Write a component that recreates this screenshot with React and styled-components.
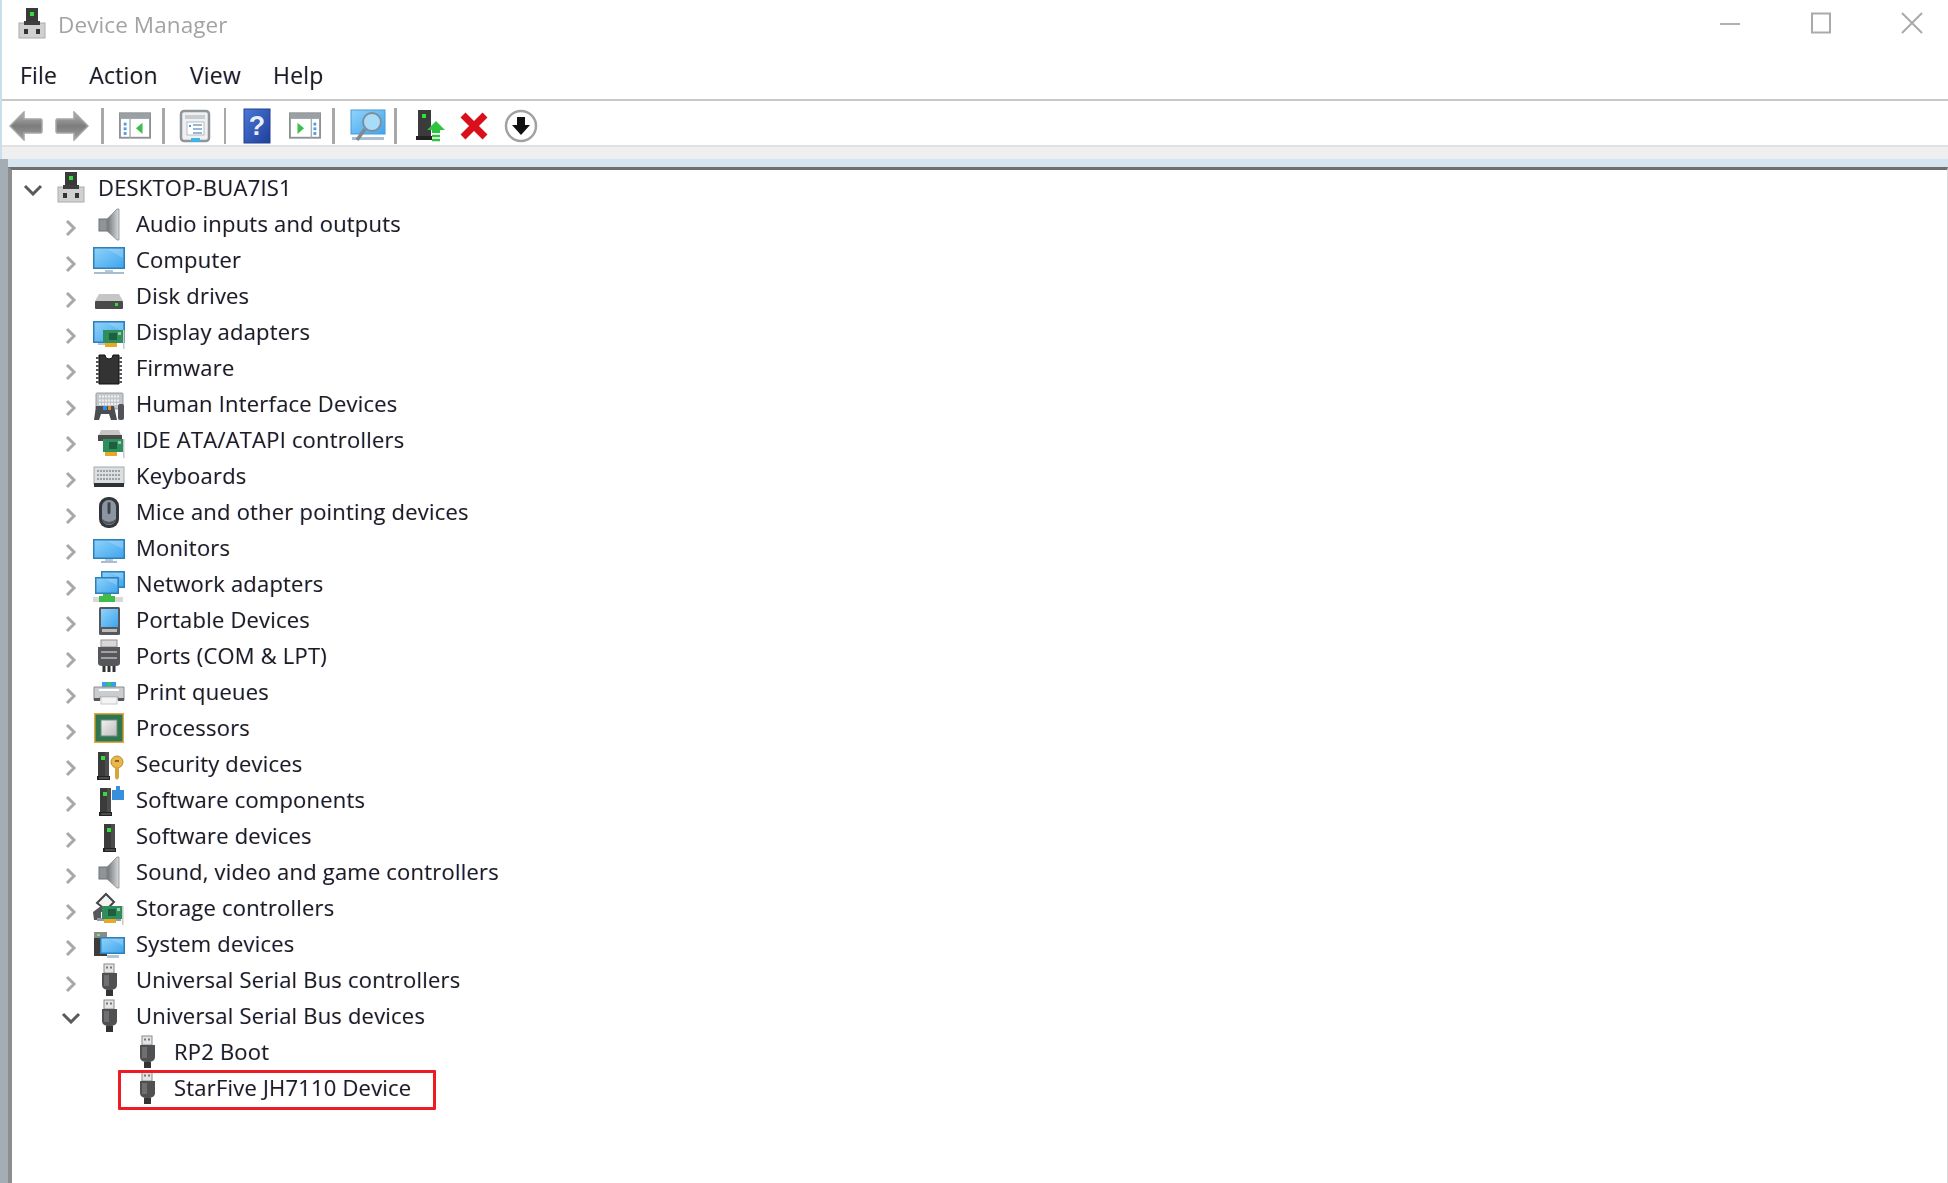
import React from "react";
import styled, { createGlobalStyle } from "styled-components";

const GlobalStyle = createGlobalStyle`
  html, body {
    margin: 0;
    padding: 0;
    background: #fff;
    overflow: hidden;
  }
  * { box-sizing: border-box; }
`;

const Window = styled.div`
  width: 1948px;
  height: 1183px;
  display: flex;
  flex-direction: column;
  background: #fff;
  font-family: "Open Sans", "Noto Sans", sans-serif;
  color: #1c1c28;
  overflow: hidden;
  filter: blur(0.6px);
  text-shadow: 0.6px 0 rgba(255, 130, 0, 0.25), -0.6px 0 rgba(0, 110, 255, 0.25);
`;

const Chrome = styled.div`
  border-left: 2px solid #c9dfeb;
  display: flex;
  flex-direction: column;
`;

const TitleBar = styled.div`
  height: 50px;
  display: flex;
  align-items: center;
  padding: 0 25px 2px 14px;
`;

const TitleText = styled.div`
  font-size: 22.5px;
  letter-spacing: 0.1px;
  color: #a3a3a6;
  margin-left: 10px;
  flex: 1;
  text-shadow: none;
`;

const WinButtons = styled.div`
  display: flex;
  gap: 69px;
  margin-bottom: 2px;
`;

const MenuBar = styled.div`
  height: 51px;
  display: flex;
  align-items: center;
  gap: 32px;
  padding: 1px 0 0 18px;
  border-bottom: 2px solid #c8c8c8;
`;

const MenuItem = styled.span`
  font-size: 23px;
  letter-spacing: 0.2px;
`;

const Toolbar = styled.div`
  height: 46px;
  display: flex;
  align-items: center;
  padding: 5px 0 0 2px;
  border-bottom: 2px solid #e2e2e2;
`;

const Tool = styled.div`
  width: ${({ $w }) => $w}px;
  height: 36px;
  display: flex;
  align-items: center;
  justify-content: center;
  flex: none;
`;

const Sep = styled.div`
  width: 3px;
  height: 36px;
  background: #a8a8a8;
`;

const Band = styled.div`
  height: 12px;
  background: #efefef;
`;

const Lower = styled.div`
  flex: 1;
  display: flex;
  min-height: 0;
`;

const Strip = styled.div`
  width: 8px;
  background: #a3adb3;
`;

const Pane = styled.div`
  flex: 1;
  display: flex;
  flex-direction: column;
  min-width: 0;
`;

const PaneTop = styled.div`
  height: 8px;
  background: #d6e4f0;
`;

const Tree = styled.div`
  flex: 1;
  background: #fff;
  border-top: 3px solid #6f6f6f;
  border-left: 4px solid #8d8d8d;
  border-right: 1px solid #d8d8d8;
`;

const Row = styled.div`
  position: relative;
  height: 36px;
  display: flex;
  align-items: center;
  padding-left: ${({ $depth }) => 9 + $depth * 38}px;
`;

const ChevronSlot = styled.div`
  width: 24px;
  height: 36px;
  flex: none;
  display: flex;
  align-items: center;
  justify-content: center;
  padding-top: ${({ $open }) => ($open ? 4 : 7)}px;
`;

const IconSlot = styled.div`
  width: 32px;
  height: 32px;
  flex: none;
  margin-left: 10px;
`;

const Label = styled.span`
  margin-left: 11px;
  padding-bottom: 2px;
  font-size: 22px;
  letter-spacing: 0.2px;
  white-space: nowrap;
`;

const Highlight = styled.div`
  position: absolute;
  left: 106px;
  top: 0;
  width: 318px;
  height: 40px;
  border: 3px solid #ed1c24;
  border-radius: 1px;
`;

const Defs = styled.svg`
  display: block;
  width: 0;
  height: 0;
`;

const Svg = ({ dy = 0, children }) => (
  <svg width="32" height="32" viewBox="0 0 32 32" style={{ display: "block", overflow: "visible" }}>
    <g transform={`translate(0 ${dy})`}>{children}</g>
  </svg>
);

const Tower = ({ x = 0, y = 0 }) => (
  <g transform={`translate(${x} ${y})`}>
    <rect x="1" y="0" width="11" height="24" fill="#3b3b3b" />
    <rect x="8" y="0" width="4" height="24" fill="#4c4c4c" />
    <rect x="4" y="4" width="4" height="4" fill="#2fe03c" />
    <rect x="0" y="24" width="13" height="4" fill="#222" />
    <rect x="2" y="25.5" width="10" height="1" fill="#777" />
  </g>
);

const Screen = ({ x = 0, y = 0, w = 32, h = 22 }) => (
  <g transform={`translate(${x} ${y})`}>
    <rect x="0.75" y="0.75" width={w - 1.5} height={h - 1.5} fill="url(#sky)" stroke="#2f7fb8" strokeWidth="1.5" />
    <path d={`M${w * 0.45} 2 L${w - 2} 2 L${w - 2} ${h * 0.5} Z`} fill="#ffffff" opacity="0.18" />
  </g>
);

const Stand = ({ y = 23, wide }) => (
  <g>
    <rect x="12" y={y} width="8" height="2" fill="#b8c8d4" />
    <rect x={wide ? 1 : 8} y={y + 2} width={wide ? 30 : 16} height="2" fill="#a9bdcc" />
  </g>
);

const Card = ({ x = 0, y = 0 }) => (
  <g transform={`translate(${x} ${y})`}>
    <rect x="0" y="0" width="20" height="13" fill="#2f8f5c" />
    <rect x="6" y="3" width="8" height="7" fill="#1f5f3f" />
    <rect x="15" y="2" width="3" height="3" fill="#8fd0a8" />
    <rect x="2" y="13" width="12" height="4" fill="#e9a825" />
    <rect x="20" y="0" width="1.5" height="19" fill="#c8c8c8" />
  </g>
);

const Disk = ({ y = 0 }) => (
  <g transform={`translate(0 ${y})`}>
    <path d="M6 0 H26 L30 7 H2 Z" fill="#c6c6c6" />
    <rect x="2" y="7" width="28" height="8" rx="1" fill="#4a4a4a" />
  </g>
);

const Speaker = () => (
  <Svg>
    <rect x="6" y="11" width="8" height="12" fill="#8f9498" stroke="#6f7377" />
    <path d="M14 11 L24 1 H26 V32 H24 L14 23 Z" fill="url(#cone)" stroke="#8a8d90" strokeWidth="0.8" />
  </Svg>
);

const Usb = () => (
  <Svg>
    <rect x="11" y="0" width="10" height="9" fill="#e4e4e4" stroke="#8a8a8a" />
    <rect x="13" y="2.5" width="2" height="2" fill="#777" />
    <rect x="17" y="2.5" width="2" height="2" fill="#777" />
    <path d="M9 9 H24 V21 Q24 25 19 26 H14 Q9 25 9 21 Z" fill="#505052" />
    <rect x="11" y="11" width="5" height="11" fill="#6f6f72" />
    <rect x="13" y="26" width="7" height="6" fill="#333" />
  </Svg>
);

const Desktop = () => (
  <Svg>
    <rect x="10" y="0" width="12" height="18" fill="#3a3a3a" />
    <rect x="14" y="4" width="4" height="4" fill="#2fe03c" />
    <rect x="3" y="15" width="26" height="15" fill="#d0d0d0" stroke="#ababab" />
    <rect x="8" y="13" width="16" height="4" fill="#3f3f3f" />
    <rect x="8" y="21" width="4" height="5" fill="#333" />
    <rect x="20" y="21" width="4" height="5" fill="#333" />
  </Svg>
);

const icons = {
  desktop: <Desktop />,
  audio: <Speaker />,
  computer: (
    <Svg dy={2}>
      <Screen h={22} y={1} />
      <Stand y={24} wide />
    </Svg>
  ),
  disk: (
    <Svg dy={3}>
      <Disk y={11} />
      <rect x="22" y="20" width="3" height="3" fill="#2fe03c" />
    </Svg>
  ),
  display: (
    <Svg dy={4}>
      <Screen h={22} y={1} />
      <rect x="5" y="23" width="8" height="2" fill="#b4c6d4" />
      <Card x={10} y={10} />
    </Svg>
  ),
  firmware: (
    <Svg dy={2}>
      <path d="M6 1 H12 A4 4 0 0 0 20 1 H26 V30 H6 Z" fill="#333" stroke="#111" />
      <path d="M3 4 H6 M3 8 H6 M3 12 H6 M3 16 H6 M3 20 H6 M3 24 H6 M3 28 H6 M26 4 H29 M26 8 H29 M26 12 H29 M26 16 H29 M26 20 H29 M26 24 H29 M26 28 H29" stroke="#555" strokeWidth="2" />
    </Svg>
  ),
  hid: (
    <Svg dy={5}>
      <rect x="3" y="0" width="27" height="16" rx="1" fill="#c4c8cc" stroke="#9a9da0" />
      <path d="M6 3.5 H27 M6 7.5 H27 M6 11 H27" stroke="#f0f0f0" strokeWidth="2" strokeDasharray="2 1" />
      <path d="M1 27 L3 13 H21 L24 27 H18 L16 21 H8 L6 27 Z" fill="#4a4d52" />
      <rect x="10" y="13" width="4" height="4" fill="#2f8fe0" />
      <rect x="15" y="13" width="3" height="4" fill="#e08a3a" />
      <rect x="25" y="11" width="6" height="16" rx="2" fill="#50545a" />
    </Svg>
  ),
  ide: (
    <Svg dy={6}>
      <path d="M8 0 H26 L28 5 H6 Z" fill="#c6c6c6" />
      <rect x="5" y="5" width="24" height="6" fill="#4a4a4a" />
      <Card x={10} y={9} />
    </Svg>
  ),
  keyboard: (
    <Svg dy={7}>
      <rect x="1" y="0" width="30" height="17" fill="#dcdfe2" stroke="#a6a9ac" />
      <path d="M4 4 H28 M4 8 H28 M4 12 H28" stroke="#9da0a3" strokeWidth="2" strokeDasharray="2 1" />
      <rect x="1" y="16" width="30" height="4" fill="#2f3236" />
    </Svg>
  ),
  mouse: (
    <Svg dy={1}>
      <rect x="6" y="0" width="20" height="31" rx="9" fill="#33363b" />
      <rect x="9" y="3" width="14" height="25" rx="6.5" fill="#8b95a2" />
      <rect x="14.5" y="5" width="3" height="12" rx="1.5" fill="#40444a" />
      <path d="M9 22 Q16 28 23 22 V24 Q16 31 9 24 Z" fill="#50545a" />
    </Svg>
  ),
  monitor: (
    <Svg dy={6}>
      <Screen h={20} y={1} />
      <Stand y={21} />
    </Svg>
  ),
  network: (
    <Svg dy={3}>
      <Screen x={8} y={0} w={24} h={17} />
      <Screen x={2} y={6} w={24} h={17} />
      <rect x="0" y="26" width="30" height="5" fill="#d8d8d8" />
      <path d="M10 23 H18 V25 H22 V31 H6 V25 H10 Z" fill="#3fbd4a" />
    </Svg>
  ),
  portable: (
    <Svg dy={3}>
      <rect x="6" y="0" width="21" height="28" rx="1.5" fill="#55585c" />
      <rect x="8" y="2" width="17" height="18" fill="url(#sky)" />
      <rect x="9" y="22" width="15" height="3" fill="#bbb" />
    </Svg>
  ),
  ports: (
    <Svg>
      <rect x="8" y="0" width="16" height="7" fill="#d8d8d8" stroke="#8f8f8f" />
      <path d="M5 7 H27 V23 Q27 26 23 26 H9 Q5 26 5 23 Z" fill="#55575a" />
      <path d="M8 12 H24 M8 18 H24" stroke="#a0a0a0" strokeWidth="2" />
      <path d="M11 26 V32 M16 26 V32 M21 26 V32" stroke="#333" strokeWidth="3" />
    </Svg>
  ),
  print: (
    <Svg dy={6}>
      <rect x="9" y="0" width="14" height="6" fill="#3a9fe0" />
      <rect x="14" y="0" width="4" height="6" fill="#39c26a" />
      <path d="M1 5 H31 V18 H25 V15 H7 V18 H1 Z" fill="#c9cdd0" stroke="#8b8e91" />
      <rect x="6" y="7" width="20" height="2" fill="#fff" />
      <rect x="8" y="15" width="16" height="7" fill="#f4f4f4" stroke="#c8c8c8" />
      <rect x="1" y="16" width="6" height="3" fill="#55585c" />
      <rect x="25" y="16" width="6" height="3" fill="#55585c" />
    </Svg>
  ),
  cpu: (
    <Svg>
      <rect x="1" y="1" width="30" height="30" fill="#e0a93a" />
      <rect x="2.5" y="2.5" width="27" height="27" fill="#2f7550" />
      <rect x="8" y="8" width="16" height="16" fill="url(#die)" stroke="#6f8f80" />
    </Svg>
  ),
  security: (
    <Svg dy={3}>
      <Tower x={4} y={1} />
      <circle cx="24" cy="11" r="6" fill="#e8b64a" stroke="#b98a2a" />
      <rect x="22" y="9" width="4" height="2" fill="#8a6a20" />
      <path d="M22 16 H26 V27 L24 29 L22 27 Z" fill="#d9a53a" />
    </Svg>
  ),
  components: (
    <Svg>
      <Tower x={6} y={4} />
      <path d="M19 6 H23 V2 H27 V6 H31 V16 H19 Z" fill="#3a8fdc" />
    </Svg>
  ),
  software: (
    <Svg>
      <Tower x={10} y={4} />
    </Svg>
  ),
  sound: <Speaker />,
  storage: (
    <Svg>
      <path d="M4 11 L13 2 L21 10 L13 18 Z" fill="#f4f4f4" stroke="#444" strokeWidth="2" />
      <path d="M0 20 L8 14 L14 20 H8 V28 H1 Z" fill="#55585c" />
      <rect x="4" y="26" width="24" height="3" fill="#999" />
      <Card x={9} y={14} />
    </Svg>
  ),
  system: (
    <Svg dy={4}>
      <rect x="1" y="0" width="13" height="24" fill="#3c3c3c" />
      <rect x="1" y="0" width="13" height="6" fill="#8a8a8a" />
      <rect x="4" y="2" width="3" height="2" fill="#7fe07f" />
      <Screen x={7} y={5} w={25} h={17} />
      <rect x="14" y="23" width="12" height="3" fill="#b4c6d4" />
    </Svg>
  ),
  usb: <Usb />,
};

const rows = [
  { depth: 0, open: true, icon: "desktop", text: "DESKTOP-BUA7IS1" },
  { depth: 1, icon: "audio", text: "Audio inputs and outputs" },
  { depth: 1, icon: "computer", text: "Computer" },
  { depth: 1, icon: "disk", text: "Disk drives" },
  { depth: 1, icon: "display", text: "Display adapters" },
  { depth: 1, icon: "firmware", text: "Firmware" },
  { depth: 1, icon: "hid", text: "Human Interface Devices" },
  { depth: 1, icon: "ide", text: "IDE ATA/ATAPI controllers" },
  { depth: 1, icon: "keyboard", text: "Keyboards" },
  { depth: 1, icon: "mouse", text: "Mice and other pointing devices" },
  { depth: 1, icon: "monitor", text: "Monitors" },
  { depth: 1, icon: "network", text: "Network adapters" },
  { depth: 1, icon: "portable", text: "Portable Devices" },
  { depth: 1, icon: "ports", text: "Ports (COM & LPT)" },
  { depth: 1, icon: "print", text: "Print queues" },
  { depth: 1, icon: "cpu", text: "Processors" },
  { depth: 1, icon: "security", text: "Security devices" },
  { depth: 1, icon: "components", text: "Software components" },
  { depth: 1, icon: "software", text: "Software devices" },
  { depth: 1, icon: "sound", text: "Sound, video and game controllers" },
  { depth: 1, icon: "storage", text: "Storage controllers" },
  { depth: 1, icon: "system", text: "System devices" },
  { depth: 1, icon: "usb", text: "Universal Serial Bus controllers" },
  { depth: 1, open: true, icon: "usb", text: "Universal Serial Bus devices" },
  { depth: 2, leaf: true, icon: "usb", text: "RP2 Boot" },
  { depth: 2, leaf: true, icon: "usb", text: "StarFive JH7110 Device", marked: true },
];

const Chevron = ({ open }) =>
  open ? (
    <svg width="20" height="12" viewBox="0 0 20 12">
      <path d="M2 2 L10 10 L18 2" fill="none" stroke="#5a5a5a" strokeWidth="3" />
    </svg>
  ) : (
    <svg width="12" height="18" viewBox="0 0 12 18">
      <path d="M2 2 L9 9 L2 16" fill="none" stroke="#a8a8a8" strokeWidth="3" />
    </svg>
  );

const PaneWindow = ({ flip }) => (
  <svg width="32" height="27" viewBox="0 0 34 28" style={{ display: "block" }}>
    <rect x="1" y="1" width="32" height="26" fill="#fff" stroke="#8d9296" strokeWidth="2" />
    <rect x="1" y="1" width="32" height="6" fill="#9ba0a4" />
    <rect x={flip ? 23 : 11} y="7" width="1.5" height="20" fill="#a8adb1" />
    {[11, 16, 21].map((y) => (
      <rect key={y} x={flip ? 26 : 5} y={y} width="3" height="3" fill="#4f9be0" />
    ))}
    {flip ? (
      <path d="M9 11 L16 17 L9 23 Z" fill="#3fbd4a" />
    ) : (
      <path d="M25 11 L18 17 L25 23 Z" fill="#3fbd4a" />
    )}
  </svg>
);

const Arrow = ({ right }) => (
  <svg width="34" height="30" viewBox="0 0 34 30" style={{ display: "block" }}>
    <path
      d={right ? "M33 15 L19 1 V8 H2 Q1 8 1 10 V20 Q1 22 2 22 H19 V29 Z" : "M1 15 L15 1 V8 H32 Q33 8 33 10 V20 Q33 22 32 22 H15 V29 Z"}
      fill="url(#arrow)"
      stroke="#a6a6a6"
      strokeWidth="1.5"
    />
  </svg>
);

export default function App() {
  return (
    <>
      <GlobalStyle />
      <Window>
        <Defs>
          <defs>
            <linearGradient id="sky" x1="0" y1="0" x2="1" y2="1">
              <stop offset="0" stopColor="#8fd3fb" />
              <stop offset="1" stopColor="#3fa4ec" />
            </linearGradient>
            <linearGradient id="cone" x1="0" y1="0" x2="1" y2="0">
              <stop offset="0" stopColor="#6f7276" />
              <stop offset="1" stopColor="#d8dadc" />
            </linearGradient>
            <linearGradient id="die" x1="0" y1="0" x2="1" y2="1">
              <stop offset="0" stopColor="#f2f2f2" />
              <stop offset="1" stopColor="#bcbcbc" />
            </linearGradient>
            <linearGradient id="arrow" x1="0" y1="0" x2="0" y2="1">
              <stop offset="0" stopColor="#b5b5b5" />
              <stop offset="0.5" stopColor="#7c7c7c" />
              <stop offset="1" stopColor="#a0a0a0" />
            </linearGradient>
            <linearGradient id="help" x1="0" y1="0" x2="1" y2="1">
              <stop offset="0" stopColor="#4a78d8" />
              <stop offset="1" stopColor="#1f3f9a" />
            </linearGradient>
          </defs>
        </Defs>

        <Chrome>
          <TitleBar>
            {icons.desktop}
            <TitleText>Device Manager</TitleText>
            <WinButtons>
              <svg width="22" height="22" viewBox="0 0 22 22">
                <path d="M1 12 H21" stroke="#b0b0b0" strokeWidth="2" />
              </svg>
              <svg width="22" height="22" viewBox="0 0 22 22">
                <rect x="2" y="1.5" width="18" height="19" fill="none" stroke="#aaa" strokeWidth="2" />
              </svg>
              <svg width="22" height="22" viewBox="0 0 22 22">
                <path d="M1 1 L21 21 M21 1 L1 21" stroke="#aaa" strokeWidth="2" />
              </svg>
            </WinButtons>
          </TitleBar>

          <MenuBar>
            <MenuItem>File</MenuItem>
            <MenuItem>Action</MenuItem>
            <MenuItem>View</MenuItem>
            <MenuItem>Help</MenuItem>
          </MenuBar>

          <Toolbar>
            <Tool $w={44}><Arrow /></Tool>
            <Tool $w={47}><Arrow right /></Tool>
            <Tool $w={15}><Sep /></Tool>
            <Tool $w={50}><PaneWindow /></Tool>
            <Tool $w={6}><Sep /></Tool>
            <Tool $w={58}>
              <svg width="32" height="34" viewBox="0 0 32 34">
                <rect x="2" y="2" width="28" height="30" rx="3" fill="#eef0f2" stroke="#90959a" strokeWidth="2.5" />
                <rect x="6" y="6" width="20" height="4" fill="#c8ccd0" />
                <rect x="8" y="13" width="17" height="13" fill="#fff" stroke="#b8bcc0" />
                <path d="M14 16 H23 M14 20 H23 M14 24 H23" stroke="#7a9fc4" strokeWidth="1.5" />
                <rect x="10" y="16" width="2" height="2" fill="#4f9be0" />
                <rect x="12" y="29" width="9" height="4" fill="#3fb4e8" />
              </svg>
            </Tool>
            <Tool $w={2}><Sep /></Tool>
            <Tool $w={62}>
              <svg width="28" height="36" viewBox="0 0 28 36">
                <rect x="1" y="1" width="26" height="34" fill="url(#help)" stroke="#23408f" />
                <text x="14" y="27" textAnchor="middle" fontFamily="Liberation Sans, sans-serif" fontSize="27" fontWeight="700" fill="#e8eefc">?</text>
              </svg>
            </Tool>
            <Tool $w={34}><PaneWindow flip /></Tool>
            <Tool $w={22}><Sep /></Tool>
            <Tool $w={48}>
              <svg width="36" height="34" viewBox="0 0 36 34">
                <rect x="1" y="1" width="34" height="24" fill="url(#sky)" stroke="#4a9ad4" />
                <rect x="2" y="28" width="32" height="3" fill="#a9c0d0" />
                <circle cx="22" cy="13" r="9" fill="#a9dcf8" stroke="#7f8f9a" strokeWidth="2" />
                <path d="M15 20 L7 31" stroke="#7f8a92" strokeWidth="3.5" />
              </svg>
            </Tool>
            <Tool $w={6}><Sep /></Tool>
            <Tool $w={64}>
              <svg width="30" height="34" viewBox="0 0 30 34">
                <rect x="3" y="1" width="13" height="26" fill="#3b3b3b" />
                <rect x="7" y="5" width="4" height="4" fill="#2fe03c" />
                <rect x="1" y="27" width="16" height="4" fill="#222" />
                <path d="M21 12 L30 21 H25 V24 H17 V21 H12 Z" fill="#2fc43f" />
                <path d="M17 27 H25 M17 31 H25" stroke="#2fc43f" strokeWidth="2.5" />
              </svg>
            </Tool>
            <Tool $w={24}>
              <svg width="30" height="30" viewBox="0 0 30 30" style={{ flex: "none" }}>
                <path d="M4 4 L26 26 M26 4 L4 26" stroke="#d9101c" strokeWidth="7" />
              </svg>
            </Tool>
            <Tool $w={70}>
              <svg width="34" height="34" viewBox="0 0 34 34">
                <circle cx="17" cy="17" r="15" fill="#fff" stroke="#a2a2a2" strokeWidth="2.5" />
                <path d="M13 8 H21 V16 H26 L17 26 L8 16 H13 Z" fill="#111" />
              </svg>
            </Tool>
          </Toolbar>

          <Band />
        </Chrome>

        <Lower>
          <Strip />
          <Pane>
            <PaneTop />
            <Tree>
              {rows.map((row) => (
                <Row key={row.text} $depth={row.depth}>
                  <ChevronSlot $open={row.open}>
                    {!row.leaf && <Chevron open={row.open} />}
                  </ChevronSlot>
                  <IconSlot>{icons[row.icon]}</IconSlot>
                  <Label>{row.text}</Label>
                  {row.marked && <Highlight />}
                </Row>
              ))}
            </Tree>
          </Pane>
        </Lower>
      </Window>
    </>
  );
}
